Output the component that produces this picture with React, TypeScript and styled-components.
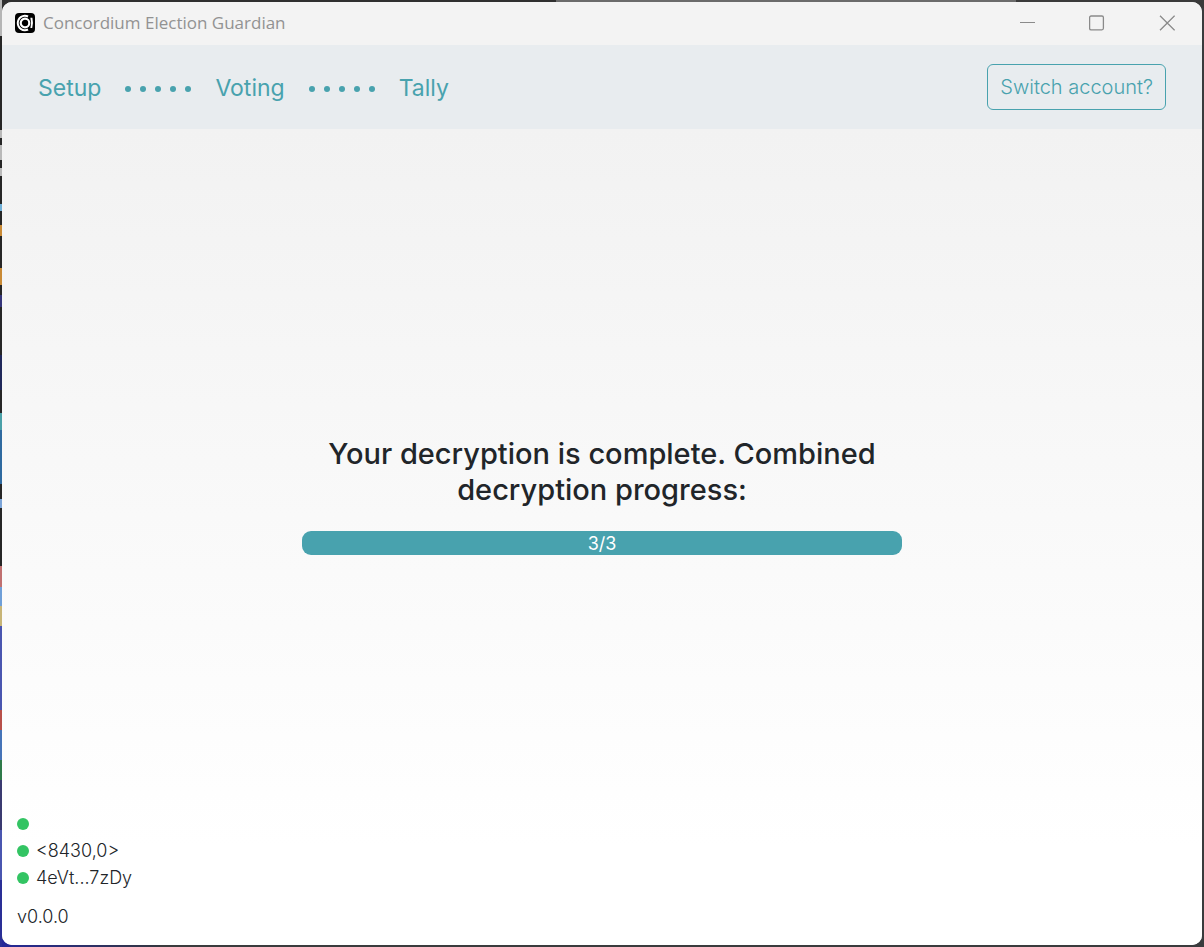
import React from "react";
import styled, { createGlobalStyle } from "styled-components";

const teal = "#48a2ae";

const GlobalStyle = createGlobalStyle`
  *, *::before, *::after { box-sizing: border-box; }
  body {
    margin: 0;
    color: #212529;
    font-family: Inter, "Liberation Sans", sans-serif;
  }
`;

const Desktop = styled.div`
  display: flex;
  min-height: 100vh;
  padding: 2px;
  background:
    linear-gradient(#b5b5b5 0 36px, #262626 36px 130px, #b9b9b9 130px 138px, #262626 138px 145px,
      #b9b9b9 145px 160px, #262626 160px 168px, #b9b9b9 168px 176px, #262626 176px 204px,
      #6fb0d8 204px 211px, #262626 211px 225px, #c98a35 225px 236px, #262626 236px 268px,
      #c98a35 268px 285px, #262626 285px 295px, #35357a 295px 307px, #262626 307px 355px,
      #20285a 355px 390px, #262626 390px 413px, #4aa0a8 413px 430px, #2f6aa0 430px 484px,
      #262626 484px 499px, #7ba4d8 499px 508px, #262626 508px 566px, #c07070 566px 587px,
      #6f9fd8 587px 606px, #c8b577 606px 626px, #4a56b0 626px 710px, #b8504a 710px 730px,
      #4674b8 730px 760px, #2f7a4a 760px 780px, #3a3a70 780px 830px, #4a56b0 830px 880px, #2a2f96 880px)
      left top / 2px 100% no-repeat,
    linear-gradient(90deg, #24289a, #33363f 160px, #3a3b3d 160px) left bottom / 100% 8px no-repeat,
    linear-gradient(90deg, #2f2f2f 0 556px, #6b6b6b 556px 1016px, #3a3a3a 1016px) left top / 100% 8px no-repeat,
    #3a3b3d;
`;

const Window = styled.div`
  display: flex;
  flex: 1;
  flex-direction: column;
  overflow: hidden;
  border-radius: 10px;
  background: #fff;
`;

const TitleBar = styled.header`
  display: flex;
  align-items: center;
  height: 43px;
  padding: 0 0 2px 13px;
  background: #f3f3f3;
`;

const AppIcon = styled.svg`
  width: 20px;
  height: 20px;
  margin-right: 8px;
`;

const WindowTitle = styled.span`
  flex: 1;
  color: #929292;
  font: 17px/24px "Open Sans", "Noto Sans", sans-serif;
`;

const CaptionButton = styled.button`
  display: grid;
  place-items: center;
  width: 70px;
  height: 40px;
  padding: 0;
  border: 0;
  background: none;
  color: #8a8a8a;
`;

const CaptionGlyph = styled.svg`
  width: 16px;
  height: 16px;
  fill: none;
  stroke: currentColor;
`;

const NavBar = styled.div`
  display: flex;
  align-items: center;
  justify-content: space-between;
  height: 84px;
  padding: 0 36px;
  background: #e8ecef;
`;

const Steps = styled.nav`
  display: flex;
  align-items: center;
  gap: 24px;
  padding-top: 2px;
`;

const StepLink = styled.a`
  color: ${teal};
  font-size: 23px;
  line-height: 36px;
  text-decoration: none;
`;

const Dots = styled.span`
  display: flex;
  gap: 9px;
  padding-top: 2px;

  i {
    width: 6px;
    height: 6px;
    border-radius: 50%;
    background: ${teal};
  }
`;

const SwitchButton = styled.button`
  height: 46px;
  padding: 0 12px;
  border: 1px solid ${teal};
  border-radius: 6px;
  background: none;
  color: ${teal};
  font: 300 20px/30px Inter, "Liberation Sans", sans-serif;
`;

const Page = styled.div`
  display: flex;
  flex: 1;
  flex-direction: column;
  background: linear-gradient(#f2f2f2, #fff 88%);
`;

const Main = styled.main`
  display: flex;
  flex: 1;
  flex-direction: column;
  align-items: center;
  justify-content: center;
  gap: 23px;
  padding: 52px 24px 0;
`;

const Heading = styled.h1`
  max-width: 600px;
  margin: 0;
  font-size: 29px;
  font-weight: 500;
  line-height: 36px;
  text-align: center;
`;

const Progress = styled.div`
  width: 100%;
  max-width: 600px;
  overflow: hidden;
  border-radius: 9px;
  background: #e9ecef;
`;

const ProgressFill = styled.div`
  padding-top: 2px;
  background: ${teal};
  color: #fff;
  font-size: 18px;
  line-height: 22px;
  text-align: center;
`;

const Footer = styled.footer`
  padding: 0 15px 15px;
  font-size: 18px;
  font-weight: 300;
  line-height: 27px;
`;

const StatusList = styled.ul`
  margin: 0 0 12px;
  padding: 0;
  list-style: none;
`;

const StatusItem = styled.li`
  display: flex;
  align-items: center;
  gap: 7px;
  height: 27px;

  &::before {
    content: "";
    width: 12px;
    height: 12px;
    border-radius: 50%;
    background: #33c463;
  }
`;

function StepDots() {
  return (
    <Dots aria-hidden="true">
      {[0, 1, 2, 3, 4].map((n) => (
        <i key={n} />
      ))}
    </Dots>
  );
}

export default function App() {
  const done = 3;
  const total = 3;
  const statuses = ["", "<8430,0>", "4eVt...7zDy"];

  return (
    <Desktop>
      <GlobalStyle />
      <Window>
        <TitleBar>
          <AppIcon viewBox="0 0 20 20" aria-hidden="true">
            <rect width="20" height="20" rx="4" fill="#000" />
            <path d="M13.5 2.6A8.2 8.2 0 1 0 13.5 17.4L12.6 15.6A6.2 6.2 0 1 1 12.6 4.4z" fill="#fff" />
            <circle cx="10" cy="10" r="4.3" fill="none" stroke="#fff" strokeWidth="2.2" />
            <path d="M15.4 4.8h2q1.2 5.2-.2 10.2h-1.8q1.4-5 0-10.2z" fill="#fff" />
          </AppIcon>
          <WindowTitle>Concordium Election Guardian</WindowTitle>
          <CaptionButton aria-label="Minimize">
            <CaptionGlyph viewBox="0 0 16 16"><path d="M1 7.5h15" /></CaptionGlyph>
          </CaptionButton>
          <CaptionButton aria-label="Maximize">
            <CaptionGlyph viewBox="0 0 16 16"><rect x=".6" y="1" width="13.8" height="13.8" rx="1.5" strokeWidth="1.3" /></CaptionGlyph>
          </CaptionButton>
          <CaptionButton aria-label="Close">
            <CaptionGlyph viewBox="0 0 16 16"><path d="M1 .7l14.6 14.6M15.6.7L1 15.3" strokeWidth="1.3" /></CaptionGlyph>
          </CaptionButton>
        </TitleBar>
        <NavBar>
          <Steps aria-label="Election phases">
            <StepLink href="#setup">Setup</StepLink>
            <StepDots />
            <StepLink href="#voting">Voting</StepLink>
            <StepDots />
            <StepLink href="#tally">Tally</StepLink>
          </Steps>
          <SwitchButton>Switch account?</SwitchButton>
        </NavBar>
        <Page>
          <Main>
            <Heading>Your decryption is complete. Combined decryption progress:</Heading>
            <Progress role="progressbar" aria-label="Combined decryption progress" aria-valuenow={done} aria-valuemin={0} aria-valuemax={total}>
              <ProgressFill style={{ width: `${(done / total) * 100}%` }}>
                {done}/{total}
              </ProgressFill>
            </Progress>
          </Main>
          <Footer>
            <StatusList>
              {statuses.map((text, index) => (
                <StatusItem key={index}>{text}</StatusItem>
              ))}
            </StatusList>
            <div>v0.0.0</div>
          </Footer>
        </Page>
      </Window>
    </Desktop>
  );
}
